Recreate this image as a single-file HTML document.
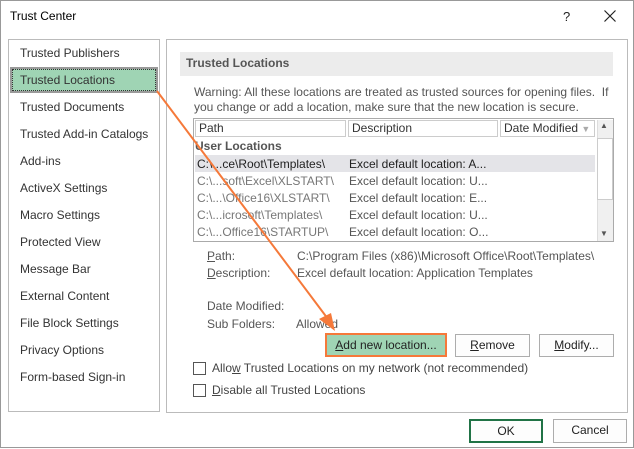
<!DOCTYPE html><html><head><style>
*{margin:0;padding:0;box-sizing:border-box}
body{width:634px;height:448px;background:#fff;font-family:"Liberation Sans",sans-serif;font-size:12px;color:#333;position:relative;overflow:hidden;border:1px solid #999}
.a{position:absolute;white-space:nowrap}
.btn{position:absolute;border:1px solid #adadad;background:#fdfdfd;text-align:center;line-height:21px;color:#222}
.cb{position:absolute;width:13px;height:13px;border:1px solid #555;background:#fff}
.li{position:absolute;left:19px}
.r{position:absolute;left:196px;color:#777}
.d{position:absolute;left:348px;color:#555}
</style></head><body>
<div class="a" style="left:9px;top:8px;color:#000;font-size:12px">Trust Center</div>
<div class="a" style="left:562px;top:8px;color:#222;font-size:13px">?</div>
<svg class="a" style="left:603px;top:9px" width="12" height="12"><path d="M0.5 0.5L11.5 11.5M11.5 0.5L0.5 11.5" stroke="#222" stroke-width="1.2"/></svg>
<div class="a" style="left:7px;top:38px;width:152px;height:373px;border:1px solid #bbb"></div>
<div class="a" style="left:9px;top:66px;width:148px;height:26px;background:#9fd4b4;border:2px solid #999;outline:1px dotted #333;outline-offset:-3px"></div>
<div class="li" style="top:45px">Trusted Publishers</div>
<div class="li" style="top:72px">Trusted Locations</div>
<div class="li" style="top:99px">Trusted Documents</div>
<div class="li" style="top:126px">Trusted Add-in Catalogs</div>
<div class="li" style="top:153px">Add-ins</div>
<div class="li" style="top:180px">ActiveX Settings</div>
<div class="li" style="top:207px">Macro Settings</div>
<div class="li" style="top:234px">Protected View</div>
<div class="li" style="top:261px">Message Bar</div>
<div class="li" style="top:288px">External Content</div>
<div class="li" style="top:315px">File Block Settings</div>
<div class="li" style="top:342px">Privacy Options</div>
<div class="li" style="top:369px">Form-based Sign-in</div>
<div class="a" style="left:165px;top:38px;width:462px;height:374px;border:1px solid #bbb"></div>
<div class="a" style="left:179px;top:51px;width:433px;height:24px;background:#ececec"></div>
<div class="a" style="left:185px;top:55px;font-weight:bold;color:#555">Trusted Locations</div>
<div class="a" style="left:193px;top:84px;color:#555;line-height:15px">Warning: All these locations are treated as trusted sources for opening files.&nbsp; If<br>you change or add a location, make sure that the new location is secure.</div>
<div class="a" style="left:192px;top:117px;width:421px;height:124px;border:1px solid #aaa"></div>
<div class="a" style="left:194px;top:119px;width:151px;height:17px;border:1px solid #ccc;background:#fff;padding-left:3px;line-height:15px">Path</div>
<div class="a" style="left:347px;top:119px;width:150px;height:17px;border:1px solid #ccc;padding-left:3px;line-height:15px">Description</div>
<div class="a" style="left:499px;top:119px;width:95px;height:17px;border:1px solid #ccc;padding-left:3px;line-height:15px">Date Modified <span style="color:#aaa;font-size:9px">▼</span></div>
<div class="a" style="left:596px;top:119px;width:16px;height:121px;background:#f0f0f0;border-left:1px solid #ddd"></div>
<div class="a" style="left:596px;top:137px;width:16px;height:62px;background:#fff;border:1px solid #ccc"></div>
<div class="a" style="left:599px;top:120px;font-size:8px;color:#555">▲</div>
<div class="a" style="left:599px;top:228px;font-size:8px;color:#555">▼</div>
<div class="a" style="left:194px;top:138px;font-weight:bold;color:#555">User Locations</div>
<div class="a" style="left:194px;top:154px;width:400px;height:17px;background:#e4e4e8"></div>
<div class="r" style="top:156px;color:#222">C:\...ce\Root\Templates\</div><div class="d" style="top:156px;color:#222">Excel default location: A...</div>
<div class="r" style="top:173px">C:\...soft\Excel\XLSTART\</div><div class="d" style="top:173px">Excel default location: U...</div>
<div class="r" style="top:190px">C:\...\Office16\XLSTART\</div><div class="d" style="top:190px">Excel default location: E...</div>
<div class="r" style="top:207px">C:\...icrosoft\Templates\</div><div class="d" style="top:207px">Excel default location: U...</div>
<div class="r" style="top:224px">C:\...Office16\STARTUP\</div><div class="d" style="top:224px">Excel default location: O...</div>
<div class="a" style="left:206px;top:248px;color:#555"><u>P</u>ath:</div>
<div class="a" style="left:296px;top:248px;color:#555">C:\Program Files (x86)\Microsoft Office\Root\Templates\</div>
<div class="a" style="left:206px;top:265px;color:#555"><u>D</u>escription:</div>
<div class="a" style="left:296px;top:265px;color:#555">Excel default location: Application Templates</div>
<div class="a" style="left:206px;top:298px;color:#555">Date Modified:</div>
<div class="a" style="left:206px;top:316px;color:#555">Sub Folders:</div>
<div class="a" style="left:295px;top:316px;color:#555">Allowed</div>
<div class="btn" style="left:324px;top:332px;width:122px;height:24px;background:#9fd4b4;border:2px solid #f5793a"><u>A</u>dd new location...</div>
<div class="btn" style="left:454px;top:333px;width:75px;height:23px"><u>R</u>emove</div>
<div class="btn" style="left:538px;top:333px;width:75px;height:23px"><u>M</u>odify...</div>
<div class="cb" style="left:192px;top:361px"></div>
<div class="a" style="left:211px;top:360px;color:#444">Allo<u>w</u> Trusted Locations on my network (not recommended)</div>
<div class="cb" style="left:192px;top:383px"></div>
<div class="a" style="left:211px;top:382px;color:#444"><u>D</u>isable all Trusted Locations</div>
<div class="btn" style="left:468px;top:418px;width:74px;height:24px;border:2px solid #217346;line-height:20px">OK</div>
<div class="btn" style="left:552px;top:418px;width:74px;height:24px">Cancel</div>
<svg class="a" style="left:0;top:0" width="634" height="448"><line x1="156" y1="90" x2="330" y2="322" stroke="#f5793a" stroke-width="2"/><polygon points="334,330 318,318 330,312" fill="#f5793a"/></svg>
</body></html>
